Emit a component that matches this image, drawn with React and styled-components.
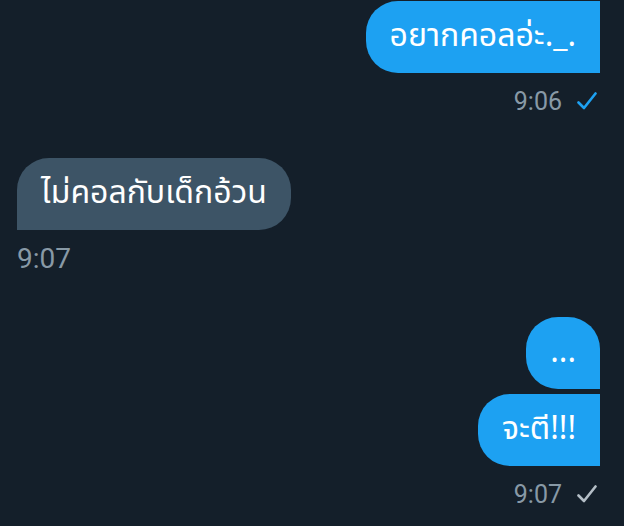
import React from 'react'
import styled, { createGlobalStyle } from 'styled-components'

const GlobalStyle = createGlobalStyle`
  html, body {
    margin: 0;
    padding: 0;
    background: #141f2a;
  }
  body {
    font-family: Roboto, "Noto Sans", sans-serif;
  }
`

const Thread = styled.main`
  display: flex;
  flex-direction: column;
  gap: 45px;
  width: 624px;
  height: 526px;
  box-sizing: border-box;
  padding: 1px 24px 0 17px;
  overflow: hidden;
`

const Group = styled.div`
  display: flex;
  flex-direction: column;
  align-items: ${props => (props.mine ? 'flex-end' : 'flex-start')};
  gap: 5px;
`

const Bubble = styled.div`
  display: flex;
  align-items: center;
  justify-content: center;
  box-sizing: border-box;
  height: 72px;
  min-width: 73px;
  padding: 0 24px 2px 24px;
  background: ${props => (props.mine ? '#1da1f2' : '#3d5466')};
  color: #fff;
  font-family: "Noto Sans Thai", "Noto Sans Thai Looped", "Noto Sans", "DejaVu Sans", sans-serif;
  font-size: 32px;
  line-height: 1;
  border-radius: ${props => props.radius};
  white-space: nowrap;
`

const Meta = styled.div`
  display: flex;
  align-items: center;
  gap: 15px;
  margin-top: 11px;
  padding-right: 3px;
  height: ${props => (props.mine ? '24px' : '26px')};
  color: #8899a6;
  font-size: ${props => (props.mine ? '25px' : '28px')};
  line-height: 1;
`

const Check = styled.svg`
  width: 20px;
  height: 18px;
  color: ${props => (props.read ? '#1da1f2' : '#b4bec6')};
`

const CheckIcon = ({ read }) => (
  <Check read={read} viewBox="0 0 20 18" fill="none">
    <polyline
      points="1.5,10.5 7,16 18.5,1.5"
      stroke="currentColor"
      strokeWidth="2.6"
      strokeLinecap="round"
      strokeLinejoin="round"
    />
  </Check>
)

const App = () => {
  return (
    <>
      <GlobalStyle />
      <Thread>
        <Group mine>
          <Bubble mine radius="32px 0 0 32px">อยากคอลอ่ะ._.</Bubble>
          <Meta mine>
            <span>9:06</span>
            <CheckIcon read />
          </Meta>
        </Group>

        <Group>
          <Bubble radius="32px 32px 32px 0">ไม่คอลกับเด็กอ้วน</Bubble>
          <Meta>
            <span>9:07</span>
          </Meta>
        </Group>

        <Group mine>
          <Bubble mine radius="32px 32px 0 32px">...</Bubble>
          <Bubble mine radius="32px 0 0 32px">จะตี!!!</Bubble>
          <Meta mine>
            <span>9:07</span>
            <CheckIcon />
          </Meta>
        </Group>
      </Thread>
    </>
  )
}

export default App
